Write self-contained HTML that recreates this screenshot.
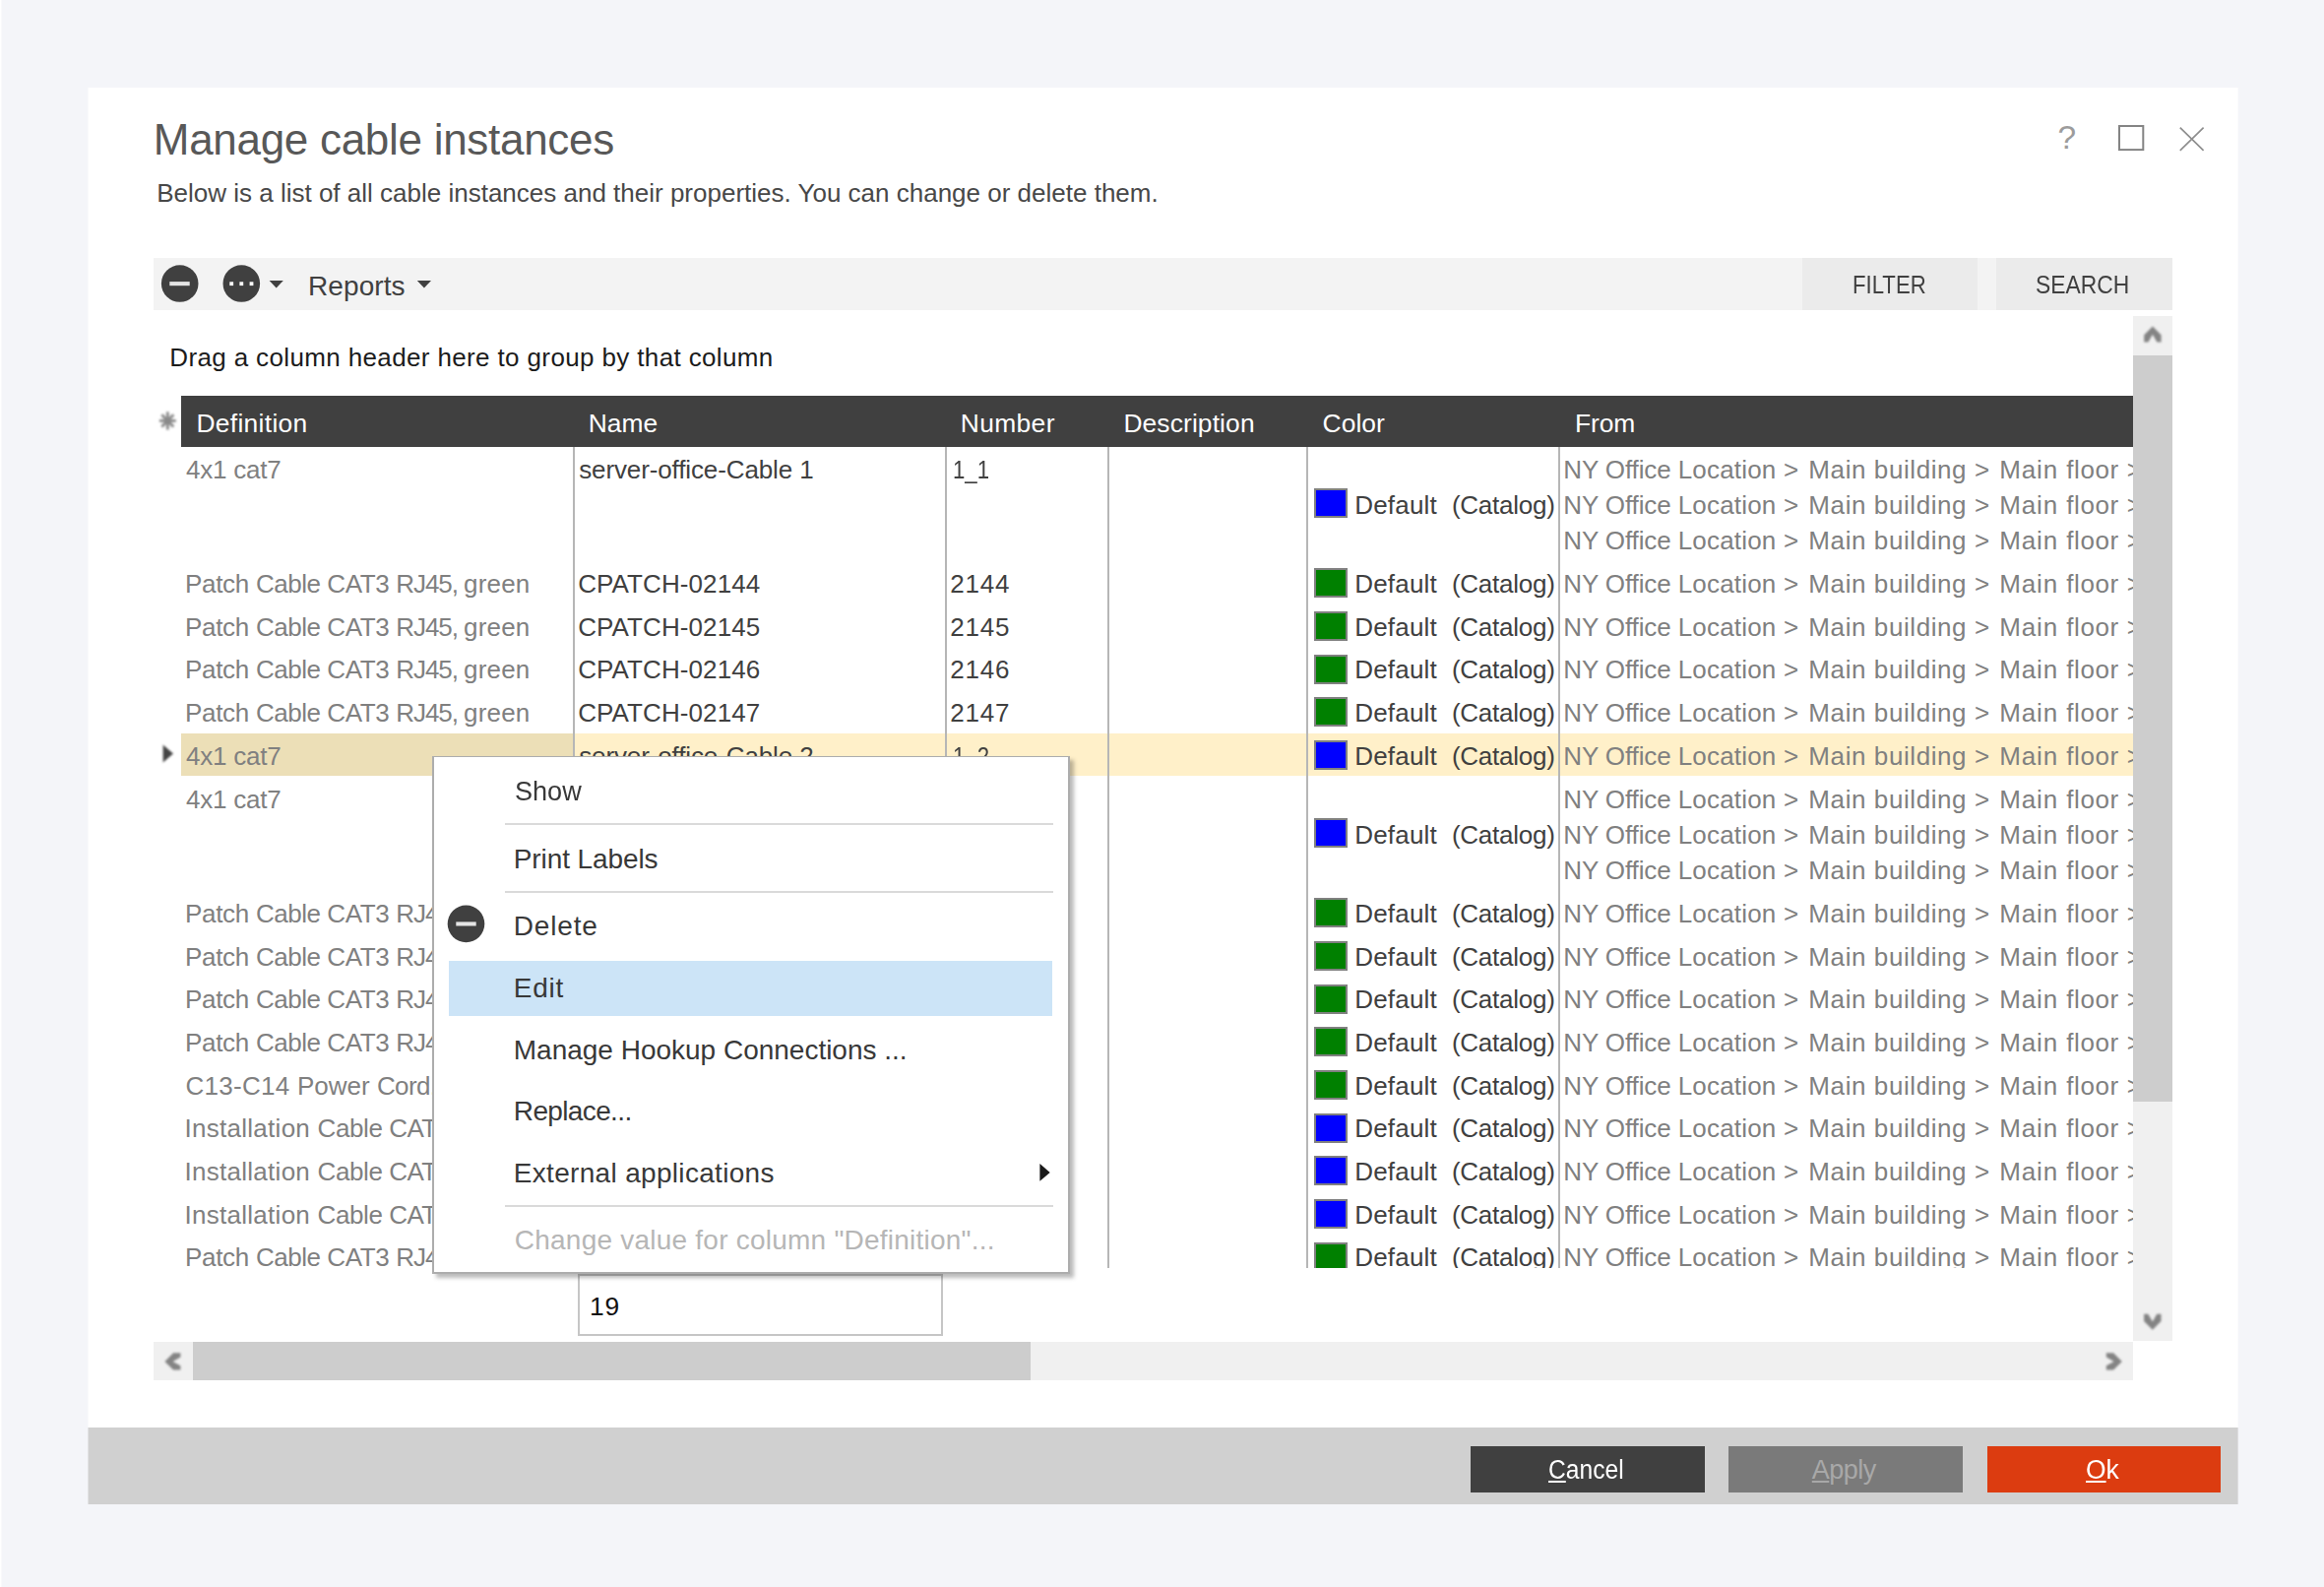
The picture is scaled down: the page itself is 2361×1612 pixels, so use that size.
<!DOCTYPE html>
<html lang="en"><head><meta charset="utf-8"><title>Manage cable instances</title>
<style>
*{box-sizing:border-box;margin:0;padding:0}
html,body{width:2361px;height:1612px;overflow:hidden}
body{background:#f4f5f9;font-family:"Liberation Sans", sans-serif;position:relative;color:#333}
.edge{position:absolute;left:0;top:0;width:2px;height:1612px;background:linear-gradient(90deg,#fff 0,#fff 50%,#f9f9fb 50%)}
.t{position:absolute;white-space:pre;display:block}
.abs,.dialog,.toolbar,.grid,.footer,.ctx,.gbody,.row,.sw,.vline,.btn,.tbbtn,.sb,.thumb,.sep,.hl,.ghead,.sum,.ico{position:absolute}
.dialog{left:90.0px;top:89.0px;width:2183.0px;height:1439.0px;background:#fff;box-shadow:-1px 0 0 #fafafc,1px 0 0 #fbfbfd}
.toolbar{left:66.00px;top:173.20px;width:2051.0px;height:52.6px;background:#f3f3f3}
.tbbtn{background:#ebebeb;top:0;height:52.6px}
.grid{left:66.00px;top:232.00px;width:2051.0px;height:1081.0px}
.ghead{left:28.30px;top:81.40px;width:1982.90px;height:51.3px;background:#404040}
.gbody{left:28.00px;top:133.00px;width:1983.20px;height:833.80px;overflow:hidden}
.row{left:0;right:0}
.row.sel{background:#fff0c9}
.row.sel .c0{position:absolute;left:0;top:0;height:100%;width:398.00px;background:#ecdfb7}
.vline{top:0;width:2px;height:100%;background:#b6b6b6}
.sw{width:34.3px;height:30px;border:2px solid #808080}
.sw.b{background:#0000ff} .sw.g{background:#008000}
.sb{background:#f0f0f0} .thumb{background:#cdcdcd}
.sum{border:2px solid #c6c6c6;background:#fff}
.footer{left:0;top:1361.00px;width:2183.0px;height:78.0px;background:#d0d0d0;box-shadow:-1px 0 0 #e2e2e4,1px 0 0 #dedee0}
.btn{top:19.20px;height:46.8px}
.ctx{z-index:5;left:439.0px;top:768.0px;width:647.7px;height:526.0px;background:#fff;box-shadow:4px 4px 4px rgba(0,0,0,.27)}
.ctx .bd{position:absolute;left:0;top:0;right:0;bottom:0;border:2px solid #adadad;border-top-width:1px}
.sep{height:2px;background:#dadada}
.hl{background:#cce4f7}
u{text-decoration-thickness:1.6px;text-underline-offset:2.2px}
svg{position:absolute;overflow:visible}
i{font-style:normal}
.c-col-s0{letter-spacing:0.208px}
.c-col-s1{letter-spacing:-0.247px}
.c-from-s0{letter-spacing:-0.114px}
.c-from-s1{letter-spacing:-0.123px}
.c-from-s2{letter-spacing:0.197px}
.c-from-s3{letter-spacing:1.496px}
.c-from-s4{letter-spacing:0.584px}
.c-from-s5{letter-spacing:0.583px}
.c-from-s6{letter-spacing:1.396px}
.c-from-s7{letter-spacing:0.884px}
.c-from-s8{letter-spacing:0.616px}
.c-from-s9{letter-spacing:-0.500px}
.c-defp-s0{letter-spacing:-0.268px}
.c-defp-s1{letter-spacing:-0.476px}
.c-defp-s2{letter-spacing:-0.351px}
.c-defp-s3{letter-spacing:-1.074px}
.c-defp-s4{letter-spacing:0.190px}
.c-defc-s0{letter-spacing:0.266px}
.c-defc-s1{letter-spacing:0.013px}
.c-defc-s2{letter-spacing:-0.614px}
.c-defc-s3{letter-spacing:0.000px}
.c-defi-s0{letter-spacing:0.275px}
.c-defi-s1{letter-spacing:-0.409px}
.c-defi-s2{letter-spacing:-0.623px}
.c-defi-s3{letter-spacing:0.000px}
</style></head>
<body>
<div class="edge"></div>
<div class="dialog">
<span class="t title" style="left:65.80px;top:24.20px;font-size:44px;line-height:57px;letter-spacing:-0.292px;color:#585858;">Manage cable instances</span>
<span class="t subtitle" style="left:69.20px;top:89.60px;font-size:26px;line-height:34px;color:#484848;">Below is a list of all cable instances and their properties. You can change or delete them.</span>
<span class="t winhelp" style="left:2000.40px;top:29.30px;font-size:33.5px;line-height:44px;color:#9c9c9c;">?</span>
<svg class="winctl" style="left:2050.00px;top:31.00px" width="110" height="44" viewBox="2140 120 110 44"><rect x="2153" y="128" width="24.3" height="24.1" fill="none" stroke="#848484" stroke-width="2"/><path d="M2214.8 129.7 L2238.6 152.9 M2238.6 129.7 L2214.8 152.9" stroke="#8e8e8e" stroke-width="1.7" fill="none"/></svg>
<div class="toolbar">
<svg style="left:0;top:0" width="300" height="53" viewBox="156.0 262.2 300 53"><circle cx="182.7" cy="288.25" r="18.8" fill="#404040"/><rect x="172.3" y="286.3" width="20.4" height="4.1" fill="#e4e4e4"/><circle cx="245.3" cy="288.25" r="18.8" fill="#404040"/><rect x="233.3" y="286.5" width="3.8" height="3.8" fill="#fff"/><rect x="243.4" y="286.5" width="3.8" height="3.8" fill="#fff"/><rect x="253.6" y="286.5" width="3.8" height="3.8" fill="#fff"/><path d="M273.6 285.2 h14.2 l-7.1 7.6z" fill="#404040"/><path d="M423.8 285.2 h14.2 l-7.1 7.6z" fill="#404040"/></svg>
<div class="tbbtn" style="left:1674.60px;top:0.00px;width:178.40px;height:52.60px;"></div>
<div class="tbbtn" style="left:1872.30px;top:0.00px;width:178.70px;height:52.60px;"></div>
<span class="t tbtext" style="left:157.00px;top:10.50px;font-size:28px;line-height:36px;letter-spacing:0.093px;color:#404040;">Reports</span>
<span class="t tbbtn-t" style="left:1726.08px;top:9.50px;font-size:25.8px;line-height:34px;transform:scaleX(0.8586);transform-origin:0 0;color:#404040;">FILTER</span>
<span class="t tbbtn-t" style="left:1911.71px;top:9.50px;font-size:25.8px;line-height:34px;transform:scaleX(0.8858);transform-origin:0 0;color:#404040;">SEARCH</span>
</div>
<div class="grid">
<span class="t grouptext" style="left:16.30px;top:25.10px;font-size:26px;line-height:34px;letter-spacing:0.365px;color:#1c1c1c;">Drag a column header here to group by that column</span>
<svg style="left:5.00px;top:96.00px;filter:blur(.8px)" width="20" height="22" viewBox="161 417 20 22"><g stroke="#8a8a8a" stroke-width="2.8" stroke-linecap="butt"><path d="M170.3 418.3 V436.6 M161.9 427.45 H178.8 M164.3 421.3 L176.3 433.6 M176.3 421.3 L164.3 433.6"/></g></svg>
<div class="ghead"></div>
<span class="t hcell" style="left:43.40px;top:91.70px;font-size:26.4px;line-height:34px;letter-spacing:0.317px;color:#ffffff;">Definition</span>
<span class="t hcell" style="left:441.80px;top:91.70px;font-size:26.4px;line-height:34px;letter-spacing:-0.040px;color:#ffffff;">Name</span>
<span class="t hcell" style="left:819.70px;top:91.70px;font-size:26.4px;line-height:34px;letter-spacing:0.385px;color:#ffffff;">Number</span>
<span class="t hcell" style="left:985.40px;top:91.70px;font-size:26.4px;line-height:34px;letter-spacing:0.117px;color:#ffffff;">Description</span>
<span class="t hcell" style="left:1187.60px;top:91.70px;font-size:26.4px;line-height:34px;letter-spacing:0.031px;color:#ffffff;">Color</span>
<span class="t hcell" style="left:1444.00px;top:91.70px;font-size:26.4px;line-height:34px;letter-spacing:-0.095px;color:#ffffff;">From</span>
<div class="gbody">
<div class="row" style="top:0.00px;height:116.67px"><span class="t c-def" style="left:4.90px;top:5.60px;font-size:26px;line-height:34px;letter-spacing:-0.218px;color:#808080;">4x1 cat7</span><span class="t c-name" style="left:404.20px;top:5.60px;font-size:26px;line-height:34px;letter-spacing:-0.119px;color:#404040;">server-office-Cable 1</span><span class="t c-num" style="left:783.85px;top:5.60px;font-size:26px;line-height:34px;transform:scaleX(0.8540);transform-origin:0 0;color:#404040;">1_1</span><div class="sw b" style="left:1150.50px;top:42.00px"></div><span class="t c-col" style="left:1192.20px;top:41.90px;font-size:26px;line-height:34px;color:#404040;"><i class="c-col-s0">Default  </i><i class="c-col-s1">(Catalog)</i></span><span class="t c-from" style="left:1404.30px;top:5.60px;font-size:26px;line-height:34px;color:#808080;"><i class="c-from-s0">NY </i><i class="c-from-s1">Office </i><i class="c-from-s2">Location </i><i class="c-from-s3">&gt; </i><i class="c-from-s4">Main </i><i class="c-from-s5">building </i><i class="c-from-s6">&gt; </i><i class="c-from-s7">Main </i><i class="c-from-s8">floor </i><i class="c-from-s9">&gt;</i></span><span class="t c-from" style="left:1404.30px;top:41.90px;font-size:26px;line-height:34px;color:#808080;"><i class="c-from-s0">NY </i><i class="c-from-s1">Office </i><i class="c-from-s2">Location </i><i class="c-from-s3">&gt; </i><i class="c-from-s4">Main </i><i class="c-from-s5">building </i><i class="c-from-s6">&gt; </i><i class="c-from-s7">Main </i><i class="c-from-s8">floor </i><i class="c-from-s9">&gt;</i></span><span class="t c-from" style="left:1404.30px;top:78.20px;font-size:26px;line-height:34px;color:#808080;"><i class="c-from-s0">NY </i><i class="c-from-s1">Office </i><i class="c-from-s2">Location </i><i class="c-from-s3">&gt; </i><i class="c-from-s4">Main </i><i class="c-from-s5">building </i><i class="c-from-s6">&gt; </i><i class="c-from-s7">Main </i><i class="c-from-s8">floor </i><i class="c-from-s9">&gt;</i></span></div>
<div class="row" style="top:116.67px;height:43.67px"><span class="t c-defp" style="left:3.90px;top:5.20px;font-size:26px;line-height:34px;letter-spacing:-0.415px;color:#808080;"><i class="c-defp-s0">Patch </i><i class="c-defp-s1">Cable </i><i class="c-defp-s2">CAT3 </i><i class="c-defp-s3">RJ45, </i><i class="c-defp-s4">green</i></span><span class="t c-name" style="left:403.20px;top:5.20px;font-size:26px;line-height:34px;letter-spacing:0.097px;color:#404040;">CPATCH-02144</span><span class="t c-num" style="left:781.30px;top:5.20px;font-size:26px;line-height:34px;letter-spacing:0.773px;color:#404040;">2144</span><div class="sw g" style="left:1150.50px;top:6.83px"></div><span class="t c-col" style="left:1192.20px;top:5.20px;font-size:26px;line-height:34px;color:#404040;"><i class="c-col-s0">Default  </i><i class="c-col-s1">(Catalog)</i></span><span class="t c-from" style="left:1404.30px;top:5.20px;font-size:26px;line-height:34px;color:#808080;"><i class="c-from-s0">NY </i><i class="c-from-s1">Office </i><i class="c-from-s2">Location </i><i class="c-from-s3">&gt; </i><i class="c-from-s4">Main </i><i class="c-from-s5">building </i><i class="c-from-s6">&gt; </i><i class="c-from-s7">Main </i><i class="c-from-s8">floor </i><i class="c-from-s9">&gt;</i></span></div>
<div class="row" style="top:160.33px;height:43.67px"><span class="t c-defp" style="left:3.90px;top:5.20px;font-size:26px;line-height:34px;letter-spacing:-0.415px;color:#808080;"><i class="c-defp-s0">Patch </i><i class="c-defp-s1">Cable </i><i class="c-defp-s2">CAT3 </i><i class="c-defp-s3">RJ45, </i><i class="c-defp-s4">green</i></span><span class="t c-name" style="left:403.20px;top:5.20px;font-size:26px;line-height:34px;letter-spacing:0.097px;color:#404040;">CPATCH-02145</span><span class="t c-num" style="left:781.30px;top:5.20px;font-size:26px;line-height:34px;letter-spacing:0.773px;color:#404040;">2145</span><div class="sw g" style="left:1150.50px;top:6.83px"></div><span class="t c-col" style="left:1192.20px;top:5.20px;font-size:26px;line-height:34px;color:#404040;"><i class="c-col-s0">Default  </i><i class="c-col-s1">(Catalog)</i></span><span class="t c-from" style="left:1404.30px;top:5.20px;font-size:26px;line-height:34px;color:#808080;"><i class="c-from-s0">NY </i><i class="c-from-s1">Office </i><i class="c-from-s2">Location </i><i class="c-from-s3">&gt; </i><i class="c-from-s4">Main </i><i class="c-from-s5">building </i><i class="c-from-s6">&gt; </i><i class="c-from-s7">Main </i><i class="c-from-s8">floor </i><i class="c-from-s9">&gt;</i></span></div>
<div class="row" style="top:204.00px;height:43.67px"><span class="t c-defp" style="left:3.90px;top:5.20px;font-size:26px;line-height:34px;letter-spacing:-0.415px;color:#808080;"><i class="c-defp-s0">Patch </i><i class="c-defp-s1">Cable </i><i class="c-defp-s2">CAT3 </i><i class="c-defp-s3">RJ45, </i><i class="c-defp-s4">green</i></span><span class="t c-name" style="left:403.20px;top:5.20px;font-size:26px;line-height:34px;letter-spacing:0.097px;color:#404040;">CPATCH-02146</span><span class="t c-num" style="left:781.30px;top:5.20px;font-size:26px;line-height:34px;letter-spacing:0.773px;color:#404040;">2146</span><div class="sw g" style="left:1150.50px;top:6.83px"></div><span class="t c-col" style="left:1192.20px;top:5.20px;font-size:26px;line-height:34px;color:#404040;"><i class="c-col-s0">Default  </i><i class="c-col-s1">(Catalog)</i></span><span class="t c-from" style="left:1404.30px;top:5.20px;font-size:26px;line-height:34px;color:#808080;"><i class="c-from-s0">NY </i><i class="c-from-s1">Office </i><i class="c-from-s2">Location </i><i class="c-from-s3">&gt; </i><i class="c-from-s4">Main </i><i class="c-from-s5">building </i><i class="c-from-s6">&gt; </i><i class="c-from-s7">Main </i><i class="c-from-s8">floor </i><i class="c-from-s9">&gt;</i></span></div>
<div class="row" style="top:247.67px;height:43.67px"><span class="t c-defp" style="left:3.90px;top:5.20px;font-size:26px;line-height:34px;letter-spacing:-0.415px;color:#808080;"><i class="c-defp-s0">Patch </i><i class="c-defp-s1">Cable </i><i class="c-defp-s2">CAT3 </i><i class="c-defp-s3">RJ45, </i><i class="c-defp-s4">green</i></span><span class="t c-name" style="left:403.20px;top:5.20px;font-size:26px;line-height:34px;letter-spacing:0.097px;color:#404040;">CPATCH-02147</span><span class="t c-num" style="left:781.30px;top:5.20px;font-size:26px;line-height:34px;letter-spacing:0.773px;color:#404040;">2147</span><div class="sw g" style="left:1150.50px;top:6.83px"></div><span class="t c-col" style="left:1192.20px;top:5.20px;font-size:26px;line-height:34px;color:#404040;"><i class="c-col-s0">Default  </i><i class="c-col-s1">(Catalog)</i></span><span class="t c-from" style="left:1404.30px;top:5.20px;font-size:26px;line-height:34px;color:#808080;"><i class="c-from-s0">NY </i><i class="c-from-s1">Office </i><i class="c-from-s2">Location </i><i class="c-from-s3">&gt; </i><i class="c-from-s4">Main </i><i class="c-from-s5">building </i><i class="c-from-s6">&gt; </i><i class="c-from-s7">Main </i><i class="c-from-s8">floor </i><i class="c-from-s9">&gt;</i></span></div>
<div class="row sel" style="top:291.00px;height:43.00px"><div class="c0"></div><span class="t c-def" style="left:4.90px;top:5.54px;font-size:26px;line-height:34px;letter-spacing:-0.218px;color:#808080;">4x1 cat7</span><span class="t c-name" style="left:404.20px;top:5.54px;font-size:26px;line-height:34px;letter-spacing:-0.119px;color:#404040;">server-office-Cable 2</span><span class="t c-num" style="left:783.85px;top:5.54px;font-size:26px;line-height:34px;transform:scaleX(0.8540);transform-origin:0 0;color:#404040;">1_2</span><div class="sw b" style="left:1150.50px;top:7.17px"></div><span class="t c-col" style="left:1192.20px;top:5.54px;font-size:26px;line-height:34px;color:#404040;"><i class="c-col-s0">Default  </i><i class="c-col-s1">(Catalog)</i></span><span class="t c-from" style="left:1404.30px;top:5.54px;font-size:26px;line-height:34px;color:#808080;"><i class="c-from-s0">NY </i><i class="c-from-s1">Office </i><i class="c-from-s2">Location </i><i class="c-from-s3">&gt; </i><i class="c-from-s4">Main </i><i class="c-from-s5">building </i><i class="c-from-s6">&gt; </i><i class="c-from-s7">Main </i><i class="c-from-s8">floor </i><i class="c-from-s9">&gt;</i></span></div>
<div class="row" style="top:335.00px;height:116.67px"><span class="t c-def" style="left:4.90px;top:5.60px;font-size:26px;line-height:34px;letter-spacing:-0.218px;color:#808080;">4x1 cat7</span><span class="t c-name" style="left:404.20px;top:5.60px;font-size:26px;line-height:34px;letter-spacing:-0.119px;color:#404040;">server-office-Cable 3</span><span class="t c-num" style="left:783.85px;top:5.60px;font-size:26px;line-height:34px;transform:scaleX(0.8540);transform-origin:0 0;color:#404040;">1_3</span><div class="sw b" style="left:1150.50px;top:42.00px"></div><span class="t c-col" style="left:1192.20px;top:41.90px;font-size:26px;line-height:34px;color:#404040;"><i class="c-col-s0">Default  </i><i class="c-col-s1">(Catalog)</i></span><span class="t c-from" style="left:1404.30px;top:5.60px;font-size:26px;line-height:34px;color:#808080;"><i class="c-from-s0">NY </i><i class="c-from-s1">Office </i><i class="c-from-s2">Location </i><i class="c-from-s3">&gt; </i><i class="c-from-s4">Main </i><i class="c-from-s5">building </i><i class="c-from-s6">&gt; </i><i class="c-from-s7">Main </i><i class="c-from-s8">floor </i><i class="c-from-s9">&gt;</i></span><span class="t c-from" style="left:1404.30px;top:41.90px;font-size:26px;line-height:34px;color:#808080;"><i class="c-from-s0">NY </i><i class="c-from-s1">Office </i><i class="c-from-s2">Location </i><i class="c-from-s3">&gt; </i><i class="c-from-s4">Main </i><i class="c-from-s5">building </i><i class="c-from-s6">&gt; </i><i class="c-from-s7">Main </i><i class="c-from-s8">floor </i><i class="c-from-s9">&gt;</i></span><span class="t c-from" style="left:1404.30px;top:78.20px;font-size:26px;line-height:34px;color:#808080;"><i class="c-from-s0">NY </i><i class="c-from-s1">Office </i><i class="c-from-s2">Location </i><i class="c-from-s3">&gt; </i><i class="c-from-s4">Main </i><i class="c-from-s5">building </i><i class="c-from-s6">&gt; </i><i class="c-from-s7">Main </i><i class="c-from-s8">floor </i><i class="c-from-s9">&gt;</i></span></div>
<div class="row" style="top:451.67px;height:43.67px"><span class="t c-defp" style="left:3.90px;top:5.20px;font-size:26px;line-height:34px;letter-spacing:-0.415px;color:#808080;"><i class="c-defp-s0">Patch </i><i class="c-defp-s1">Cable </i><i class="c-defp-s2">CAT3 </i><i class="c-defp-s3">RJ45, </i><i class="c-defp-s4">green</i></span><span class="t c-name" style="left:403.20px;top:5.20px;font-size:26px;line-height:34px;letter-spacing:0.097px;color:#404040;">CPATCH-02148</span><span class="t c-num" style="left:781.30px;top:5.20px;font-size:26px;line-height:34px;letter-spacing:0.773px;color:#404040;">2148</span><div class="sw g" style="left:1150.50px;top:6.83px"></div><span class="t c-col" style="left:1192.20px;top:5.20px;font-size:26px;line-height:34px;color:#404040;"><i class="c-col-s0">Default  </i><i class="c-col-s1">(Catalog)</i></span><span class="t c-from" style="left:1404.30px;top:5.20px;font-size:26px;line-height:34px;color:#808080;"><i class="c-from-s0">NY </i><i class="c-from-s1">Office </i><i class="c-from-s2">Location </i><i class="c-from-s3">&gt; </i><i class="c-from-s4">Main </i><i class="c-from-s5">building </i><i class="c-from-s6">&gt; </i><i class="c-from-s7">Main </i><i class="c-from-s8">floor </i><i class="c-from-s9">&gt;</i></span></div>
<div class="row" style="top:495.34px;height:43.67px"><span class="t c-defp" style="left:3.90px;top:5.20px;font-size:26px;line-height:34px;letter-spacing:-0.415px;color:#808080;"><i class="c-defp-s0">Patch </i><i class="c-defp-s1">Cable </i><i class="c-defp-s2">CAT3 </i><i class="c-defp-s3">RJ45, </i><i class="c-defp-s4">green</i></span><span class="t c-name" style="left:403.20px;top:5.20px;font-size:26px;line-height:34px;letter-spacing:0.097px;color:#404040;">CPATCH-02149</span><span class="t c-num" style="left:781.30px;top:5.20px;font-size:26px;line-height:34px;letter-spacing:0.773px;color:#404040;">2149</span><div class="sw g" style="left:1150.50px;top:6.83px"></div><span class="t c-col" style="left:1192.20px;top:5.20px;font-size:26px;line-height:34px;color:#404040;"><i class="c-col-s0">Default  </i><i class="c-col-s1">(Catalog)</i></span><span class="t c-from" style="left:1404.30px;top:5.20px;font-size:26px;line-height:34px;color:#808080;"><i class="c-from-s0">NY </i><i class="c-from-s1">Office </i><i class="c-from-s2">Location </i><i class="c-from-s3">&gt; </i><i class="c-from-s4">Main </i><i class="c-from-s5">building </i><i class="c-from-s6">&gt; </i><i class="c-from-s7">Main </i><i class="c-from-s8">floor </i><i class="c-from-s9">&gt;</i></span></div>
<div class="row" style="top:539.00px;height:43.67px"><span class="t c-defp" style="left:3.90px;top:5.20px;font-size:26px;line-height:34px;letter-spacing:-0.415px;color:#808080;"><i class="c-defp-s0">Patch </i><i class="c-defp-s1">Cable </i><i class="c-defp-s2">CAT3 </i><i class="c-defp-s3">RJ45, </i><i class="c-defp-s4">green</i></span><span class="t c-name" style="left:403.20px;top:5.20px;font-size:26px;line-height:34px;letter-spacing:0.097px;color:#404040;">CPATCH-02150</span><span class="t c-num" style="left:781.30px;top:5.20px;font-size:26px;line-height:34px;letter-spacing:0.773px;color:#404040;">2150</span><div class="sw g" style="left:1150.50px;top:6.83px"></div><span class="t c-col" style="left:1192.20px;top:5.20px;font-size:26px;line-height:34px;color:#404040;"><i class="c-col-s0">Default  </i><i class="c-col-s1">(Catalog)</i></span><span class="t c-from" style="left:1404.30px;top:5.20px;font-size:26px;line-height:34px;color:#808080;"><i class="c-from-s0">NY </i><i class="c-from-s1">Office </i><i class="c-from-s2">Location </i><i class="c-from-s3">&gt; </i><i class="c-from-s4">Main </i><i class="c-from-s5">building </i><i class="c-from-s6">&gt; </i><i class="c-from-s7">Main </i><i class="c-from-s8">floor </i><i class="c-from-s9">&gt;</i></span></div>
<div class="row" style="top:582.67px;height:43.67px"><span class="t c-defp" style="left:3.90px;top:5.20px;font-size:26px;line-height:34px;letter-spacing:-0.415px;color:#808080;"><i class="c-defp-s0">Patch </i><i class="c-defp-s1">Cable </i><i class="c-defp-s2">CAT3 </i><i class="c-defp-s3">RJ45, </i><i class="c-defp-s4">green</i></span><span class="t c-name" style="left:403.20px;top:5.20px;font-size:26px;line-height:34px;letter-spacing:0.097px;color:#404040;">CPATCH-02151</span><span class="t c-num" style="left:781.30px;top:5.20px;font-size:26px;line-height:34px;letter-spacing:0.773px;color:#404040;">2151</span><div class="sw g" style="left:1150.50px;top:6.83px"></div><span class="t c-col" style="left:1192.20px;top:5.20px;font-size:26px;line-height:34px;color:#404040;"><i class="c-col-s0">Default  </i><i class="c-col-s1">(Catalog)</i></span><span class="t c-from" style="left:1404.30px;top:5.20px;font-size:26px;line-height:34px;color:#808080;"><i class="c-from-s0">NY </i><i class="c-from-s1">Office </i><i class="c-from-s2">Location </i><i class="c-from-s3">&gt; </i><i class="c-from-s4">Main </i><i class="c-from-s5">building </i><i class="c-from-s6">&gt; </i><i class="c-from-s7">Main </i><i class="c-from-s8">floor </i><i class="c-from-s9">&gt;</i></span></div>
<div class="row" style="top:626.34px;height:43.67px"><span class="t c-defc" style="left:4.50px;top:5.20px;font-size:26px;line-height:34px;color:#808080;"><i class="c-defc-s0">C13-C14 </i><i class="c-defc-s1">Power </i><i class="c-defc-s2">Cord</i><i class="c-defc-s3">, black</i></span><span class="t c-name" style="left:402.20px;top:5.20px;font-size:26px;line-height:34px;color:#404040;">PWR-00012</span><span class="t c-num" style="left:783.70px;top:5.20px;font-size:26px;line-height:34px;color:#404040;">12</span><div class="sw g" style="left:1150.50px;top:6.83px"></div><span class="t c-col" style="left:1192.20px;top:5.20px;font-size:26px;line-height:34px;color:#404040;"><i class="c-col-s0">Default  </i><i class="c-col-s1">(Catalog)</i></span><span class="t c-from" style="left:1404.30px;top:5.20px;font-size:26px;line-height:34px;color:#808080;"><i class="c-from-s0">NY </i><i class="c-from-s1">Office </i><i class="c-from-s2">Location </i><i class="c-from-s3">&gt; </i><i class="c-from-s4">Main </i><i class="c-from-s5">building </i><i class="c-from-s6">&gt; </i><i class="c-from-s7">Main </i><i class="c-from-s8">floor </i><i class="c-from-s9">&gt;</i></span></div>
<div class="row" style="top:670.00px;height:43.67px"><span class="t c-defi" style="left:3.50px;top:5.20px;font-size:26px;line-height:34px;color:#808080;"><i class="c-defi-s0">Installation </i><i class="c-defi-s1">Cable </i><i class="c-defi-s2">CAT</i><i class="c-defi-s3">7, blue</i></span><span class="t c-name" style="left:403.20px;top:5.20px;font-size:26px;line-height:34px;color:#404040;">CINST-00031</span><span class="t c-num" style="left:784.70px;top:5.20px;font-size:26px;line-height:34px;color:#404040;">31</span><div class="sw b" style="left:1150.50px;top:6.83px"></div><span class="t c-col" style="left:1192.20px;top:5.20px;font-size:26px;line-height:34px;color:#404040;"><i class="c-col-s0">Default  </i><i class="c-col-s1">(Catalog)</i></span><span class="t c-from" style="left:1404.30px;top:5.20px;font-size:26px;line-height:34px;color:#808080;"><i class="c-from-s0">NY </i><i class="c-from-s1">Office </i><i class="c-from-s2">Location </i><i class="c-from-s3">&gt; </i><i class="c-from-s4">Main </i><i class="c-from-s5">building </i><i class="c-from-s6">&gt; </i><i class="c-from-s7">Main </i><i class="c-from-s8">floor </i><i class="c-from-s9">&gt;</i></span></div>
<div class="row" style="top:713.67px;height:43.67px"><span class="t c-defi" style="left:3.50px;top:5.20px;font-size:26px;line-height:34px;color:#808080;"><i class="c-defi-s0">Installation </i><i class="c-defi-s1">Cable </i><i class="c-defi-s2">CAT</i><i class="c-defi-s3">7, blue</i></span><span class="t c-name" style="left:403.20px;top:5.20px;font-size:26px;line-height:34px;color:#404040;">CINST-00032</span><span class="t c-num" style="left:784.70px;top:5.20px;font-size:26px;line-height:34px;color:#404040;">32</span><div class="sw b" style="left:1150.50px;top:6.83px"></div><span class="t c-col" style="left:1192.20px;top:5.20px;font-size:26px;line-height:34px;color:#404040;"><i class="c-col-s0">Default  </i><i class="c-col-s1">(Catalog)</i></span><span class="t c-from" style="left:1404.30px;top:5.20px;font-size:26px;line-height:34px;color:#808080;"><i class="c-from-s0">NY </i><i class="c-from-s1">Office </i><i class="c-from-s2">Location </i><i class="c-from-s3">&gt; </i><i class="c-from-s4">Main </i><i class="c-from-s5">building </i><i class="c-from-s6">&gt; </i><i class="c-from-s7">Main </i><i class="c-from-s8">floor </i><i class="c-from-s9">&gt;</i></span></div>
<div class="row" style="top:757.34px;height:43.67px"><span class="t c-defi" style="left:3.50px;top:5.20px;font-size:26px;line-height:34px;color:#808080;"><i class="c-defi-s0">Installation </i><i class="c-defi-s1">Cable </i><i class="c-defi-s2">CAT</i><i class="c-defi-s3">7, blue</i></span><span class="t c-name" style="left:403.20px;top:5.20px;font-size:26px;line-height:34px;color:#404040;">CINST-00033</span><span class="t c-num" style="left:784.70px;top:5.20px;font-size:26px;line-height:34px;color:#404040;">33</span><div class="sw b" style="left:1150.50px;top:6.83px"></div><span class="t c-col" style="left:1192.20px;top:5.20px;font-size:26px;line-height:34px;color:#404040;"><i class="c-col-s0">Default  </i><i class="c-col-s1">(Catalog)</i></span><span class="t c-from" style="left:1404.30px;top:5.20px;font-size:26px;line-height:34px;color:#808080;"><i class="c-from-s0">NY </i><i class="c-from-s1">Office </i><i class="c-from-s2">Location </i><i class="c-from-s3">&gt; </i><i class="c-from-s4">Main </i><i class="c-from-s5">building </i><i class="c-from-s6">&gt; </i><i class="c-from-s7">Main </i><i class="c-from-s8">floor </i><i class="c-from-s9">&gt;</i></span></div>
<div class="row" style="top:801.00px;height:43.67px"><span class="t c-defp" style="left:3.90px;top:5.20px;font-size:26px;line-height:34px;letter-spacing:-0.415px;color:#808080;"><i class="c-defp-s0">Patch </i><i class="c-defp-s1">Cable </i><i class="c-defp-s2">CAT3 </i><i class="c-defp-s3">RJ45, </i><i class="c-defp-s4">green</i></span><span class="t c-name" style="left:403.20px;top:5.20px;font-size:26px;line-height:34px;letter-spacing:0.097px;color:#404040;">CPATCH-02152</span><span class="t c-num" style="left:781.30px;top:5.20px;font-size:26px;line-height:34px;letter-spacing:0.773px;color:#404040;">2152</span><div class="sw g" style="left:1150.50px;top:6.83px"></div><span class="t c-col" style="left:1192.20px;top:5.20px;font-size:26px;line-height:34px;color:#404040;"><i class="c-col-s0">Default  </i><i class="c-col-s1">(Catalog)</i></span><span class="t c-from" style="left:1404.30px;top:5.20px;font-size:26px;line-height:34px;color:#808080;"><i class="c-from-s0">NY </i><i class="c-from-s1">Office </i><i class="c-from-s2">Location </i><i class="c-from-s3">&gt; </i><i class="c-from-s4">Main </i><i class="c-from-s5">building </i><i class="c-from-s6">&gt; </i><i class="c-from-s7">Main </i><i class="c-from-s8">floor </i><i class="c-from-s9">&gt;</i></span></div>
<div class="vline" style="left:398.00px"></div>
<div class="vline" style="left:776.00px"></div>
<div class="vline" style="left:941.00px"></div>
<div class="vline" style="left:1143.00px"></div>
<div class="vline" style="left:1399.00px"></div>
</div>
<svg style="left:9.00px;top:434.00px;filter:blur(.8px)" width="14" height="22" viewBox="165 755 14 22"><path d="M165.6 756.4 L176 765.5 L165.6 774.6z" fill="#444"/></svg>
<div class="sum" style="left:431.40px;top:972.80px;width:371.00px;height:63.00px;"></div>
<span class="t sumtext" style="left:442.90px;top:988.60px;font-size:26.4px;line-height:34px;letter-spacing:0.823px;color:#111111;">19</span>
<div class="sb" style="left:2011.20px;top:0.20px;width:39.80px;height:1041.00px;"></div>
<div class="thumb" style="left:2011.20px;top:40.00px;width:39.80px;height:757.60px;"></div>
<svg style="left:2011.20px;top:0.20px;filter:blur(.8px)" width="40" height="1041" viewBox="2167.2 321.2 40 1041"><polygon points="2187.1,331.8 2195.8,340.5 2195.8,347.8 2191.5,347.8 2187.1,340.0 2182.7,347.8 2178.4,347.8 2178.4,340.5" fill="#848484"/><polygon points="2187.0,1351.0 2195.7,1342.3 2195.7,1335.0 2191.4,1335.0 2187.0,1342.8 2182.6,1335.0 2178.3,1335.0 2178.3,1342.3" fill="#848484"/></svg>
<div class="sb" style="left:0.00px;top:1041.50px;width:2011.20px;height:39.80px;"></div>
<div class="thumb" style="left:39.80px;top:1041.50px;width:851.60px;height:39.80px;"></div>
<svg style="left:0;top:1041.50px;filter:blur(.8px)" width="2011" height="40" viewBox="156 1362.5 2011 40"><polygon points="167.4,1382.4 176.1,1391.1 183.4,1391.1 183.4,1386.8 175.6,1382.4 183.4,1378.0 183.4,1373.7 176.1,1373.7" fill="#848484"/><polygon points="2155.8,1382.4 2147.1,1391.1 2139.8,1391.1 2139.8,1386.8 2147.6,1382.4 2139.8,1378.0 2139.8,1373.7 2147.1,1373.7" fill="#848484"/></svg>
</div>
<div class="footer">
<div class="btn" style="left:1404.10px;top:19.20px;width:237.70px;height:46.80px;background:#404040"></div>
<div class="btn" style="left:1666.00px;top:19.20px;width:238.00px;height:46.80px;background:#7a7a7a"></div>
<div class="btn" style="left:1928.70px;top:19.20px;width:237.70px;height:46.80px;background:#dc3c10"></div>
<span class="t btn-t" style="left:1483.49px;top:25.60px;font-size:27px;line-height:35px;transform:scaleX(0.9117);transform-origin:0 0;color:#ffffff;"><u>C</u>ancel</span>
<span class="t btn-t" style="left:1750.80px;top:25.60px;font-size:27px;line-height:35px;letter-spacing:-0.535px;color:#a8a8a8;"><u>A</u>pply</span>
<span class="t btn-t" style="left:2029.02px;top:25.60px;font-size:27px;line-height:35px;transform:scaleX(0.9794);transform-origin:0 0;color:#ffffff;"><u>O</u>k</span>
</div>
</div>
<div class="ctx"><div class="bd"></div>
<div class="hl" style="left:17.10px;top:207.90px;width:612.70px;height:56.10px;"></div>
<div class="sep" style="left:74.40px;top:68.20px;width:556.60px;height:2.00px;"></div>
<div class="sep" style="left:74.40px;top:136.60px;width:556.60px;height:2.00px;"></div>
<div class="sep" style="left:74.40px;top:456.00px;width:556.60px;height:2.00px;"></div>
<span class="t mi" style="left:83.83px;top:18.00px;font-size:28px;line-height:36px;transform:scaleX(0.9668);transform-origin:0 0;color:#383838;">Show</span>
<span class="t mi" style="left:82.80px;top:86.70px;font-size:28px;line-height:36px;letter-spacing:-0.106px;color:#383838;">Print Labels</span>
<span class="t mi" style="left:82.80px;top:155.10px;font-size:28px;line-height:36px;letter-spacing:0.827px;color:#383838;">Delete</span>
<span class="t mi" style="left:82.80px;top:217.70px;font-size:28px;line-height:36px;letter-spacing:0.777px;color:#383838;">Edit</span>
<span class="t mi" style="left:82.80px;top:280.50px;font-size:28px;line-height:36px;letter-spacing:-0.009px;color:#383838;">Manage Hookup Connections ...</span>
<span class="t mi" style="left:82.80px;top:343.20px;font-size:28px;line-height:36px;letter-spacing:-0.632px;color:#383838;">Replace...</span>
<span class="t mi" style="left:82.80px;top:405.70px;font-size:28px;line-height:36px;letter-spacing:0.316px;color:#383838;">External applications</span>
<span class="t mi dis" style="left:83.80px;top:474.20px;font-size:28px;line-height:36px;letter-spacing:0.230px;color:#b6b6b6;">Change value for column "Definition"...</span>
<svg style="left:15.00px;top:151.00px" width="40" height="40" viewBox="454 919 40 40"><circle cx="473.5" cy="938.4" r="18.8" fill="#404040"/><rect x="463.3" y="936.4" width="20.4" height="4.1" fill="#e4e4e4"/></svg>
<svg style="left:616.00px;top:412.00px" width="14" height="22" viewBox="1055 1180 14 22"><path d="M1056.4 1182 L1066.7 1190.9 L1056.4 1199.8z" fill="#1a1a1a"/></svg>
</div>
</body></html>
